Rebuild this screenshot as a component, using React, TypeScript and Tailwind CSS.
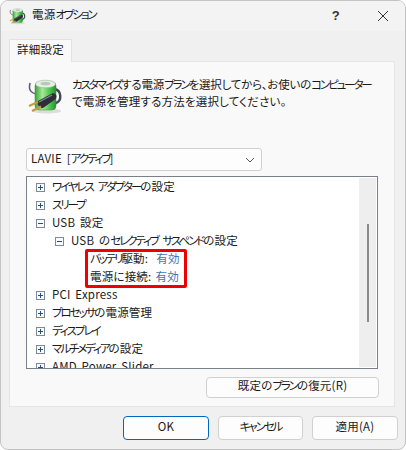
import React from "react";

const FONT = "font-['Noto_Sans_CJK_JP','Noto_Sans',sans-serif] [font-feature-settings:'palt'] tracking-[0.2px] [word-spacing:2px]";

// katakana sits much narrower in the original UI font
function Jp({ text }: { text: string }) {
  return (
    <>
      {text.split(/([\u30A0-\u30FF]+)/).map((part, i) =>
        i % 2 === 1 ? (
          <span key={i} className="tracking-[-2.1px]">{part}</span>
        ) : (
          <span key={i}>{part}</span>
        )
      )}
    </>
  );
}

function PlugIcon({ size, id }: { size: number; id: string }) {
  return (
    <svg width={size} height={size} viewBox="0 0 36 36">
      <defs>
        <linearGradient id={id} x1="0" x2="1" y1="0" y2="0">
          <stop offset="0" stopColor="#3aa33a" />
          <stop offset="0.35" stopColor="#a5ea94" />
          <stop offset="0.7" stopColor="#4cc650" />
          <stop offset="1" stopColor="#2a8f30" />
        </linearGradient>
      </defs>
      <ellipse cx="20" cy="32" rx="14" ry="2.5" fill="#dcdcdc" />
      <path d="M3 4 C1 12 5 14 9 15" fill="none" stroke="#5c5c78" strokeWidth="1.6" />
      <path d="M27 10 C35 11 35 22 29 24 L22 25" fill="none" stroke="#45455a" strokeWidth="2.4" />
      <rect x="8" y="3" width="21" height="28" rx="4" fill={`url(#${id})`} stroke="#3f8f3f" strokeWidth="0.5" />
      <ellipse cx="18.5" cy="5" rx="10" ry="3.8" fill="#e6f0e4" stroke="#9ab09a" strokeWidth="0.6" />
      <ellipse cx="18.5" cy="4.6" rx="5" ry="1.9" fill="#b9c9b9" />
      <path d="M11 22 L25 14.5 C29 13 31 18 28 20.5 L16 29 C13 30 9 25 11 22 Z" fill="#2e2e38" />
      <path d="M12 23 L25 16" stroke="#8a8a9c" strokeWidth="1.1" />
      <path d="M11 23 L2 27" stroke="#c49a3e" strokeWidth="2.2" />
      <path d="M14 27.5 L5 32" stroke="#c49a3e" strokeWidth="2.2" />
    </svg>
  );
}

function Expander({ open }: { open?: boolean }) {
  return (
    <span className="relative w-[9px] h-[9px] border border-[#7f8a99] bg-[#fbfbfb] shrink-0">
      <span className="absolute left-[1px] top-[3px] w-[5px] h-[1px] bg-[#2b4a8a]" />
      {!open && <span className="absolute left-[3px] top-[1px] w-[1px] h-[5px] bg-[#2b4a8a]" />}
    </span>
  );
}

function TreeRow({ label, open, indent = "pl-[9px]" }: { label: string; open?: boolean; indent?: string }) {
  return (
    <div className={`flex items-center gap-[7px] h-[18px] shrink-0 whitespace-nowrap ${indent}`}>
      <Expander open={open} />
      <span className="-mt-[1px]"><Jp text={label} /></span>
    </div>
  );
}

function SettingRow({ label, value, gap }: { label: string; value: string; gap: string }) {
  return (
    <div className="flex items-center h-[18px] pl-[63px] whitespace-nowrap">
      <span className="-mt-[1px]"><Jp text={label} />:</span>
      <span className={`-mt-[1px] text-[#3f74b5] ${gap}`}>{value}</span>
    </div>
  );
}

function Button({ children, primary, className = "" }: { children: React.ReactNode; primary?: boolean; className?: string }) {
  return (
    <button
      className={`flex items-center justify-center rounded-[4px] bg-[#fdfdfd] text-[11.5px] text-[#1a1a1a] pb-[3px] ${
        primary ? "border-[1.5px] border-[#0067c0]" : "border border-[#d0d0d0]"
      } ${className}`}
    >
      {children}
    </button>
  );
}

export default function App() {
  return (
    <div className={`w-[406px] h-[450px] bg-white overflow-hidden text-[11.5px] text-[#1a1a1a] ${FONT}`}>
      <div className="flex flex-col w-[406px] h-[450px] rounded-[8px] border border-[#c4c4c4] bg-[#f0f0f0] overflow-hidden">
        {/* title bar */}
        <div className="flex items-center h-[30px] shrink-0 bg-[#f3f3f3] pl-[8px]">
          <PlugIcon size={17} id="bat-small" />
          <span className="ml-[6px] -mt-[3px]"><Jp text="電源オプション" /></span>
          <span className="ml-auto mr-[37px] text-[13px] font-['Liberation_Sans',sans-serif] font-bold text-[#333]">?</span>
          <svg width="12" height="12" viewBox="0 0 12 12" className="mr-[16px]">
            <path d="M1 1 L11 11 M11 1 L1 11" stroke="#333" strokeWidth="1" fill="none" />
          </svg>
        </div>

        {/* tab */}
        <div className="flex pl-[8px] pt-[8px] shrink-0">
          <div className="flex items-center justify-center w-[63px] h-[23px] pb-[3px] bg-[#f9f9f9] border border-b-0 border-[#e2e2e2] z-10 -mb-[1px]">
            詳細設定
          </div>
        </div>

        {/* panel */}
        <div className="flex flex-col ml-[8px] mr-[10px] h-[346px] shrink-0 bg-[#f9f9f9] border border-[#e5e5e5] pl-[16px] pr-[16px]">
          <div className="flex pt-[14px] h-[86px] shrink-0">
            <div className="pl-[1px] pt-[3px]">
              <PlugIcon size={36} id="bat-large" />
            </div>
            <p className="ml-[9px] leading-[17px] whitespace-nowrap">
              <span className="tracking-[-0.2px]">
                <Jp text="カスタマイズする電源プランを選択してから、お使いのコンピューター" />
              </span>
              <br />
              <Jp text="で電源を管理する方法を選択してください。" />
            </p>
          </div>

          <div className="flex items-center justify-between w-[236px] h-[23px] shrink-0 rounded-[3px] border border-[#d0d0d0] bg-[#fdfdfd] pl-[4px] pr-[6px]">
            <span className="-mt-[2px]">LAVIE [<Jp text="アクティブ" />]</span>
            <svg width="10" height="6" viewBox="0 0 10 6">
              <path d="M1 1 L5 5 L9 1" stroke="#555" strokeWidth="1" fill="none" />
            </svg>
          </div>

          <div className="flex w-[352px] h-[193px] mt-[5px] shrink-0 border border-[#7a8088] bg-white overflow-hidden">
            <div className="flex flex-col flex-1 pt-[1px] overflow-hidden">
              <TreeRow label="ワイヤレス アダプターの設定" />
              <TreeRow label="スリープ" />
              <TreeRow label="USB 設定" open />
              <TreeRow label="USB のセレクティブ サスペンドの設定" open indent="pl-[28px]" />
              <div className="relative shrink-0">
                <SettingRow label="バッテリ駆動" value="有効" gap="ml-[8px]" />
                <SettingRow label="電源に接続" value="有効" gap="ml-[4px]" />
                <div className="absolute left-[58px] -top-[1px] w-[102px] h-[39px] border-[3px] border-[#ef0000] rounded-[2px]" />
              </div>
              <TreeRow label="PCI Express" />
              <TreeRow label="プロセッサの電源管理" />
              <TreeRow label="ディスプレイ" />
              <TreeRow label="マルチメディアの設定" />
              <TreeRow label="AMD Power Slider" />
            </div>
            <div className="flex flex-col items-center w-[17px] shrink-0 my-[1px] mr-[1px] bg-[#eeeeee] pt-[46px]">
              <div className="w-[2px] h-[98px] bg-[#8a8a8a]" />
            </div>
          </div>

          <div className="flex justify-end w-[353px] mt-[8px] shrink-0">
            <Button className="w-[173px] h-[21px]"><Jp text="既定のプランの復元(R)" /></Button>
          </div>
        </div>

        {/* footer */}
        <div className="flex gap-[9px] justify-end pr-[7px] pt-[9px]">
          <Button primary className="w-[86px] h-[24px]">OK</Button>
          <Button className="w-[85px] h-[24px]"><Jp text="キャンセル" /></Button>
          <Button className="w-[86px] h-[24px]">適用(A)</Button>
        </div>
      </div>
    </div>
  );
}
